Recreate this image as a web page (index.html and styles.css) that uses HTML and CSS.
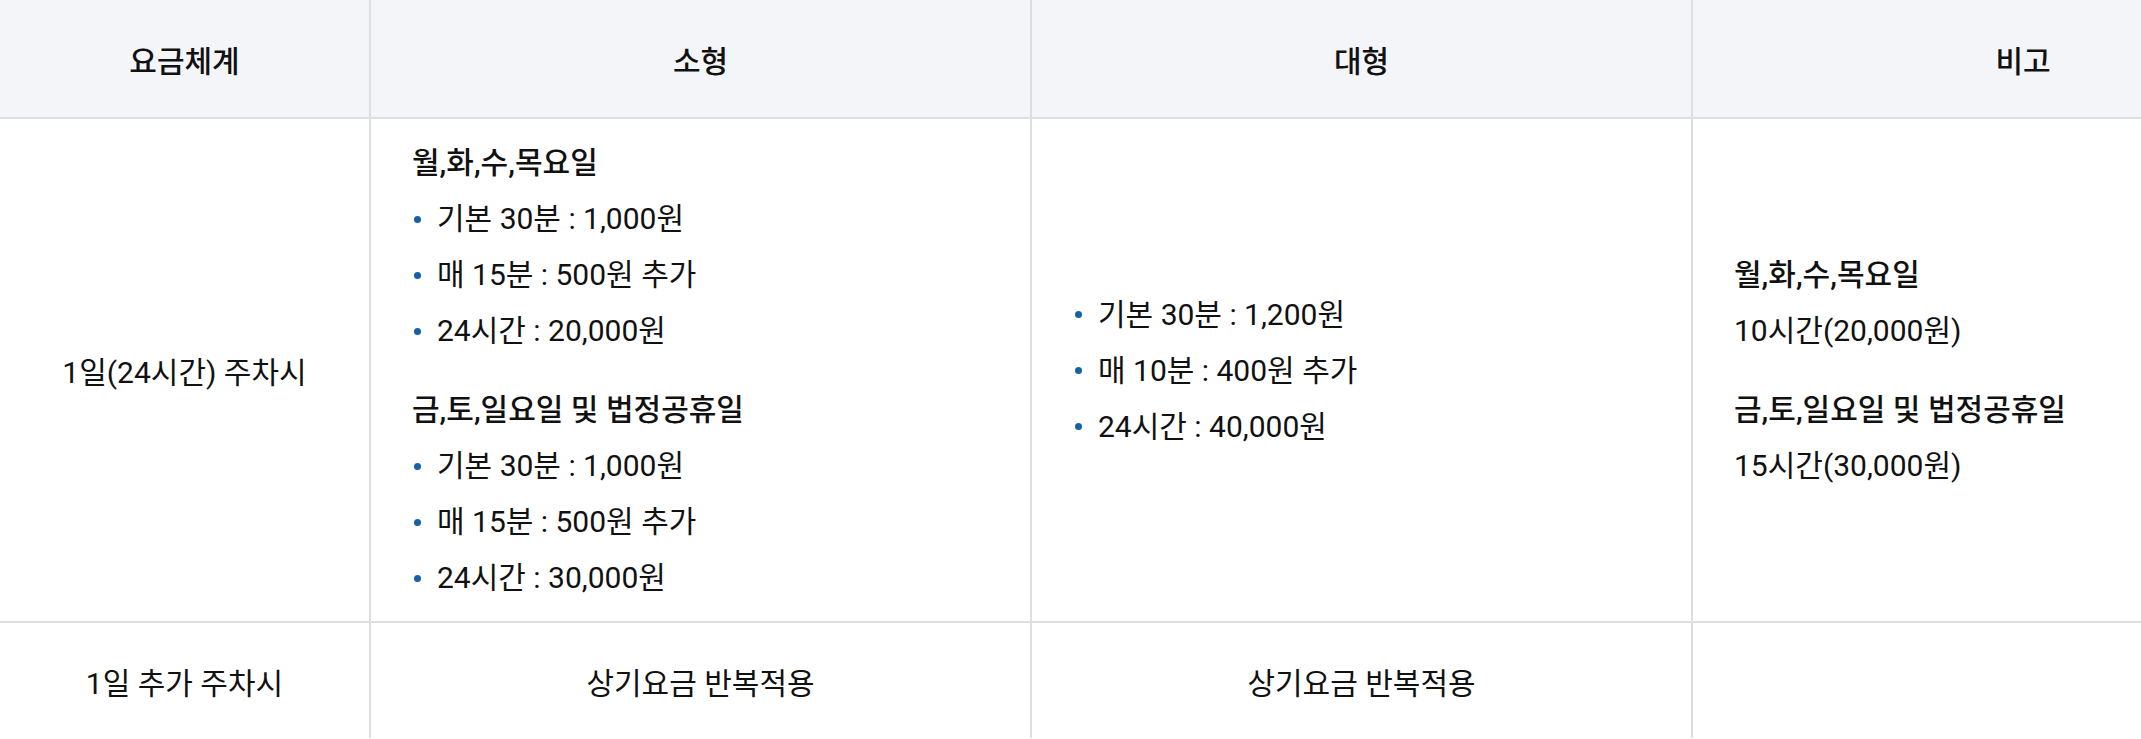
FILE: index.html
```html
<!DOCTYPE html>
<html lang="ko">
<head>
<meta charset="utf-8">
<title>요금체계</title>
<link rel="stylesheet" href="styles.css">
</head>
<body>
<table class="fee-table">
  <colgroup>
    <col class="c1">
    <col class="c2">
    <col class="c3">
    <col class="c4">
  </colgroup>
  <thead>
    <tr>
      <th>요금체계</th>
      <th>소형</th>
      <th>대형</th>
      <th>비고</th>
    </tr>
  </thead>
  <tbody>
    <tr class="main-row">
      <td class="center">1일(24시간) 주차시</td>
      <td class="left">
        <div class="group">
          <p class="title">월,화,수,목요일</p>
          <ul class="dots">
            <li>기본 30분 : 1,000원</li>
            <li>매 15분 : 500원 추가</li>
            <li>24시간 : 20,000원</li>
          </ul>
        </div>
        <div class="group">
          <p class="title">금,토,일요일 및 법정공휴일</p>
          <ul class="dots">
            <li>기본 30분 : 1,000원</li>
            <li>매 15분 : 500원 추가</li>
            <li>24시간 : 30,000원</li>
          </ul>
        </div>
      </td>
      <td class="left">
        <ul class="dots">
          <li>기본 30분 : 1,200원</li>
          <li>매 10분 : 400원 추가</li>
          <li>24시간 : 40,000원</li>
        </ul>
      </td>
      <td class="left">
        <div class="group">
          <p class="title">월,화,수,목요일</p>
          <p class="plain">10시간(20,000원)</p>
        </div>
        <div class="group">
          <p class="title">금,토,일요일 및 법정공휴일</p>
          <p class="plain">15시간(30,000원)</p>
        </div>
      </td>
    </tr>
    <tr class="last-row">
      <td class="center">1일 추가 주차시</td>
      <td class="center">상기요금 반복적용</td>
      <td class="center">상기요금 반복적용</td>
      <td class="center"></td>
    </tr>
  </tbody>
</table>
</body>
</html>
```
FILE: styles.css
```css
html, body {
  margin: 0;
  padding: 0;
  overflow: hidden;
  background: #ffffff;
}

body {
  font-family: Roboto, "Noto Sans CJK KR", sans-serif;
  font-size: 30px;
  color: #111111;
}

.fee-table {
  width: 2354px;
  table-layout: fixed;
  border-collapse: collapse;
}

.c1 { width: 370px; }
.c2 { width: 661px; }
.c3 { width: 661px; }
.c4 { width: 662px; }

.fee-table th,
.fee-table td {
  border: 2px solid #dddee1;
  padding: 0;
  vertical-align: middle;
}

.fee-table thead th {
  border-top: none;
  background: #f4f5f9;
  height: 117px;
  font-weight: 500;
  text-align: center;
}

.fee-table th:first-child,
.fee-table td:first-child {
  border-left: none;
}

.last-row td {
  height: 115px;
  border-bottom: none;
}

.center {
  text-align: center;
}

.fee-table td.left {
  padding: 16px 20px 15px 41px;
}

.group + .group {
  margin-top: 23px;
}

.title {
  margin: 0;
  line-height: 56px;
  font-weight: 500;
}

.plain {
  margin: 0;
  line-height: 56px;
}

.dots {
  list-style: none;
  margin: 0;
  padding: 0;
}

.dots li {
  display: flex;
  align-items: center;
  line-height: 56px;
}

.dots li::before {
  content: "";
  width: 7px;
  height: 7px;
  border-radius: 50%;
  background: #1660a6;
  margin-left: 2px;
  margin-right: 16px;
  flex: none;
}
```
